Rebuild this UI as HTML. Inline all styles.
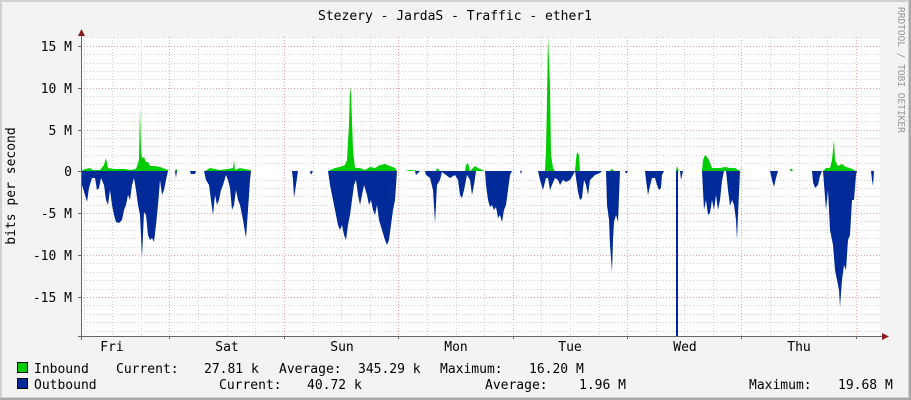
<!DOCTYPE html>
<html><head><meta charset="utf-8"><style>
html,body{margin:0;padding:0;background:#f3f3f3}
svg{display:block}
text{font-family:"DejaVu Sans Mono","Liberation Mono",monospace;font-size:13px;fill:#000}
</style></head><body>
<svg width="911" height="400" viewBox="0 0 911 400" xmlns="http://www.w3.org/2000/svg">
<rect x="0" y="0" width="911" height="400" fill="#f3f3f3"/>
<rect x="1" y="1" width="908" height="397" fill="none" stroke="#d0d0d0" stroke-width="2"/>
<line x1="0" y1="399" x2="911" y2="399" stroke="#a8a8a8" stroke-width="2"/>
<line x1="910" y1="0" x2="910" y2="400" stroke="#a8a8a8" stroke-width="2"/>
<rect x="81" y="37" width="799" height="299" fill="#fff"/>
<g stroke="#d0d0d0" stroke-width="1" stroke-dasharray="1,2">
<path d="M81 37.5H880M81 46.5H880M81 54.5H880M81 63.5H880M81 71.5H880M81 79.5H880M81 96.5H880M81 104.5H880M81 113.5H880M81 121.5H880M81 138.5H880M81 146.5H880M81 155.5H880M81 163.5H880M81 180.5H880M81 188.5H880M81 196.5H880M81 205.5H880M81 221.5H880M81 230.5H880M81 238.5H880M81 247.5H880M81 263.5H880M81 272.5H880M81 280.5H880M81 289.5H880M81 305.5H880M81 314.5H880M81 322.5H880M81 331.5H880"/>
<path d="M84.5 37V336M112.5 37V336M141.5 37V336M198.5 37V336M227.5 37V336M255.5 37V336M313.5 37V336M341.5 37V336M370.5 37V336M427.5 37V336M456.5 37V336M484.5 37V336M541.5 37V336M570.5 37V336M599.5 37V336M656.5 37V336M684.5 37V336M713.5 37V336M770.5 37V336M799.5 37V336M827.5 37V336"/>
</g>
<g stroke="#f0a0a0" stroke-width="1" stroke-dasharray="1,2">
<path d="M81 46.5H880M81 88.5H880M81 130.5H880M81 213.5H880M81 255.5H880M81 297.5H880"/>
<path d="M169.5 37V336M284.5 37V336M398.5 37V336M513.5 37V336M627.5 37V336M741.5 37V336M856.5 37V336"/>
</g>
<polygon fill="#002a97" points="81,171 82,185 85,195 87,202 89,188 92,178 95,178 97,190 99,188 101,178 104,185 106,200 108,205 110,190 112,205 114,215 116,222 119,223 122,220 124,210 126,205 128,195 130,200 132,185 134,178 136,190 138,205 140,215 142,258 144,212 146,215 148,235 150,240 152,238 154,242 156,225 158,205 160,180 162,195 164,190 166,180 168,171 175,171 176,178 177,171 190,171 191,174 195,174 196,171 204,171 206,180 209,185 211,200 213,215 215,195 217,205 219,200 221,190 223,185 226,175 228,180 230,188 232,210 234,205 236,190 238,200 240,205 243,220 246,238 248,210 250,180 251,171 292,171 293,180 294,198 296,185 298,171 310,171 311,175 313,171 328,171 330,185 333,200 336,215 338,225 340,230 342,225 344,235 346,240 348,225 350,215 352,200 354,185 356,180 358,195 360,205 362,195 364,185 367,195 369,205 371,200 373,210 375,215 377,205 379,220 382,230 385,240 387,245 389,240 391,225 393,210 395,200 397,171 415,171 416,175 420,171 425,171 426,175 430,178 433,190 435,223 437,185 440,180 442,172 446,175 450,178 455,175 458,180 460,195 462,198 464,190 467,175 470,180 472,195 474,185 476,171 485,171 486,185 488,200 490,207 492,205 494,210 496,207 498,218 500,215 502,222 504,210 506,205 508,190 510,175 512,171 520,171 521,174 522,171 538,171 540,180 543,190 546,178 548,178 550,190 552,185 555,178 558,180 560,185 563,180 566,182 570,180 573,175 575,171 577,185 578,192 580,200 582,198 584,180 586,185 588,195 590,180 592,178 595,175 600,173 602,171 606,171 607,205 609,220 610,245 611,258 612,272 613,240 614,222 616,215 618,222 620,171 625,171 626,174 628,171 645,171 646,180 648,195 650,186 652,178 655,178 657,185 659,190 661,188 662,175 664,171 676,171 676,336 678,336 678,171 680,171 681,180 683,171 702,171 704,210 706,200 708,215 710,213 712,200 714,210 716,195 718,210 720,200 722,181 724,171 726,171 728,190 730,206 732,200 734,205 736,220 737,240 738,215 740,171 770,171 772,180 774,187 776,178 778,171 812,171 813,182 815,188 818,185 820,176 822,171 823,171 826,210 828,190 830,230 833,245 835,270 837,280 839,290 840,307 842,280 844,265 846,270 848,240 850,235 852,200 854,200 856,175 857,171 871,171 872,180 873,186 874,171"/>
<polygon fill="#00cc00" points="81,171 85,169 90,168 93,170 100,170 104,165 106,158 108,168 115,169 120,169 125,169 130,170 136,169 139,160 140,108 141,150 142,158 144,157 146,162 148,162 150,166 155,166 160,167 168,170 169,171 175,171 176,169 178,171 205,171 210,168 215,169 220,170 228,169 233,168 234,160 235,170 240,168 250,170 251,171 328,171 335,168 340,167 345,165 347,160 349,125 350,86 351,95 352,120 353,150 355,168 360,168 365,170 370,167 375,168 380,165 385,164 390,166 395,168 397,171 405,171 410,170 420,171 436,171 437,168 440,171 465,171 466,165 468,163 470,171 475,166 478,168 485,171 545,171 546,150 547,100 548,36 549,60 550,85 551,155 553,168 555,171 575,171 576,160 577,152 579,155 580,171 610,171 611,169 615,171 676,171 677,166 679,171 702,171 703,160 705,155 707,157 709,160 712,168 716,168 720,168 725,167 730,168 735,168 740,171 790,171 791,168 793,171 823,171 826,168 830,168 832,160 834,140 835,160 838,166 842,164 846,167 850,168 856,171"/>
<g stroke="#666" stroke-width="1">
<line x1="81.5" y1="34" x2="81.5" y2="340"/>
<line x1="78" y1="336.5" x2="884" y2="336.5"/>
<path d="M78 46.5h3M78 88.5h3M78 130.5h3M78 171.5h3M78 213.5h3M78 255.5h3M78 297.5h3"/>
<path d="M169.5 336v3M284.5 336v3M398.5 336v3M513.5 336v3M627.5 336v3M741.5 336v3M856.5 336v3"/>
</g>
<polygon points="78,36 85,36 81.5,29" fill="#8b1a1a"/>
<polygon points="882,333 882,340 889,336.5" fill="#8b1a1a"/>
<text x="455" y="20" text-anchor="middle">Stezery - JardaS - Traffic - ether1</text>
<g text-anchor="end">
<text x="72" y="51">15 M</text>
<text x="72" y="93">10 M</text>
<text x="72" y="135">5 M</text>
<text x="72" y="176">0</text>
<text x="72" y="218">-5 M</text>
<text x="72" y="260">-10 M</text>
<text x="72" y="302">-15 M</text>
</g>
<text transform="translate(15,186) rotate(-90)" text-anchor="middle">bits per second</text>
<text transform="translate(898,7) rotate(90)" style="font-size:9.5px;fill:#999">RRDTOOL / TOBI OETIKER</text>
<g text-anchor="middle">
<text x="112" y="351">Fri</text>
<text x="227" y="351">Sat</text>
<text x="342" y="351">Sun</text>
<text x="456" y="351">Mon</text>
<text x="570" y="351">Tue</text>
<text x="685" y="351">Wed</text>
<text x="799" y="351">Thu</text>
</g>
<rect x="17.5" y="362.5" width="10" height="10" fill="#00cc00" stroke="#000"/>
<rect x="17.5" y="378.5" width="10" height="10" fill="#002a97" stroke="#000"/>
<text x="34" y="373">Inbound</text>
<text x="116" y="373">Current:</text>
<text x="204" y="373">27.81 k</text>
<text x="279" y="373">Average:</text>
<text x="358" y="373">345.29 k</text>
<text x="440" y="373">Maximum:</text>
<text x="529" y="373">16.20 M</text>
<text x="34" y="389">Outbound</text>
<text x="219" y="389">Current:</text>
<text x="307" y="389">40.72 k</text>
<text x="485" y="389">Average:</text>
<text x="579" y="389">1.96 M</text>
<text x="749" y="389">Maximum:</text>
<text x="838" y="389">19.68 M</text>
</svg>
</body></html>
